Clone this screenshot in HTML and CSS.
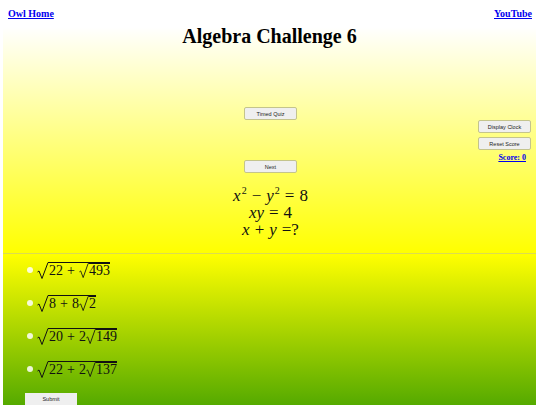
FILE: index.html
```html
<!DOCTYPE html>
<html lang="en">
<head>
<meta charset="utf-8">
<title>Algebra Challenge 6</title>
<link rel="stylesheet" href="styles.css">
</head>
<body>
<nav class="topbar"><a href="#">Owl Home</a><a href="#">YouTube</a></nav>
<div class="page">
  <div class="upper">
    <h1>Algebra Challenge 6</h1>
    <div class="center-btn timed"><button>Timed Quiz</button></div>
    <aside class="side">
      <button>Display Clock</button>
      <button>Reset Score</button>
      <a class="score" href="#">Score: 0</a>
    </aside>
    <div class="center-btn next"><button>Next</button></div>
    <div class="question">
      <div><i>x</i><sup>2</sup><span class="op">−</span><i>y</i><sup>2</sup><span class="op">=</span>8</div>
      <div><i>xy</i><span class="op">=</span>4</div>
      <div><i>x</i><span class="op">+</span><i>y</i><span class="op eq">=</span>?</div>
    </div>
  </div>
  <hr class="rule">
  <ul class="answers">
    <li><span class="radio"></span><span class="rad outer"><svg class="sign" viewBox="0 0 12 17" preserveAspectRatio="none"><path d="M0.5 10 L2 9 L5 16.5 L11 0.5 L12 0.5"/></svg><span class="over">22<span class="op">+</span><span class="rad inner"><svg class="sign" viewBox="0 0 12 17" preserveAspectRatio="none"><path d="M0.5 10 L2 9 L5 16.5 L11 0.5 L12 0.5"/></svg><span class="over">493</span></span></span></span></li>
    <li><span class="radio"></span><span class="rad outer"><svg class="sign" viewBox="0 0 12 17" preserveAspectRatio="none"><path d="M0.5 10 L2 9 L5 16.5 L11 0.5 L12 0.5"/></svg><span class="over">8<span class="op">+</span>8<span class="rad inner"><svg class="sign" viewBox="0 0 12 17" preserveAspectRatio="none"><path d="M0.5 10 L2 9 L5 16.5 L11 0.5 L12 0.5"/></svg><span class="over">2</span></span></span></span></li>
    <li><span class="radio"></span><span class="rad outer"><svg class="sign" viewBox="0 0 12 17" preserveAspectRatio="none"><path d="M0.5 10 L2 9 L5 16.5 L11 0.5 L12 0.5"/></svg><span class="over">20<span class="op">+</span>2<span class="rad inner"><svg class="sign" viewBox="0 0 12 17" preserveAspectRatio="none"><path d="M0.5 10 L2 9 L5 16.5 L11 0.5 L12 0.5"/></svg><span class="over">149</span></span></span></span></li>
    <li><span class="radio"></span><span class="rad outer"><svg class="sign" viewBox="0 0 12 17" preserveAspectRatio="none"><path d="M0.5 10 L2 9 L5 16.5 L11 0.5 L12 0.5"/></svg><span class="over">22<span class="op">+</span>2<span class="rad inner"><svg class="sign" viewBox="0 0 12 17" preserveAspectRatio="none"><path d="M0.5 10 L2 9 L5 16.5 L11 0.5 L12 0.5"/></svg><span class="over">137</span></span></span></span></li>
  </ul>
  <button class="submit">Submit</button>
</div>
</body>
</html>
```
FILE: styles.css
```css
html,body{margin:0;padding:0;height:405px;overflow:hidden;background:#fff;}
body{font-family:"Liberation Serif",serif;}
.topbar{display:flex;justify-content:space-between;padding:8px 8px 0;height:19px;font-size:10px;font-weight:700;}
.topbar a,.score{color:#00e;text-decoration:underline;}
.page{margin:0 4px 0 3px;height:378px;background:linear-gradient(#fff 0,#ff0 226px,#ff0 228px,#5a0 378px);}
.upper{position:relative;height:226px;}
h1{margin:0;text-align:center;font-size:20px;line-height:18px;font-weight:700;color:#000;}
.center-btn{display:flex;justify-content:center;padding-left:2px;}
button{font-family:"Liberation Sans",sans-serif;font-size:5.5px;color:#222;background:#efefef;border:1px solid #c4c48c;border-radius:2px;padding:0;}
.center-btn button{width:53px;height:13px;}
.timed{margin-top:62px;}
.next{margin-top:40px;}
.side{position:absolute;right:5px;top:93px;display:flex;flex-direction:column;align-items:flex-end;gap:4px;}
.side button{width:53px;height:13px;}
.score{font-size:8px;font-weight:700;margin-right:5px;margin-top:-1px;}
.question{margin-top:14px;padding-left:2px;text-align:center;font-size:17px;line-height:17px;color:#111;}
.question sup{font-size:10px;line-height:0;margin-left:1px;}
.question .op{margin:0 5px;}
.question .eq{margin-right:0;}
.rule{margin:0;border:0;border-top:1px solid #dcdc50;}
.answers{list-style:none;margin:-0.5px 0 0;padding:0 0 0 24px;}
.answers li{display:flex;align-items:center;height:33px;font-size:14px;color:#111;}
.radio{width:6px;height:6px;border-radius:50%;background:#fff;margin-right:4px;opacity:.85;flex:none;}
.rad{display:inline-flex;align-items:stretch;}
.sign{width:12px;height:17px;flex:none;overflow:visible;}
.sign path{fill:none;stroke:#111;stroke-width:1;}
.inner .sign{width:10px;height:15px;}
.over{display:inline-flex;align-items:flex-end;border-top:1px solid #111;line-height:15px;height:15px;}
.inner .over{height:14px;line-height:14px;}
.inner{align-self:flex-end;}
.answers .op{margin:0 4px;}
.submit{display:block;margin:7.5px 0 0 22px;width:52px;height:12px;border:0;border-radius:0;background:#efefef;}
```
